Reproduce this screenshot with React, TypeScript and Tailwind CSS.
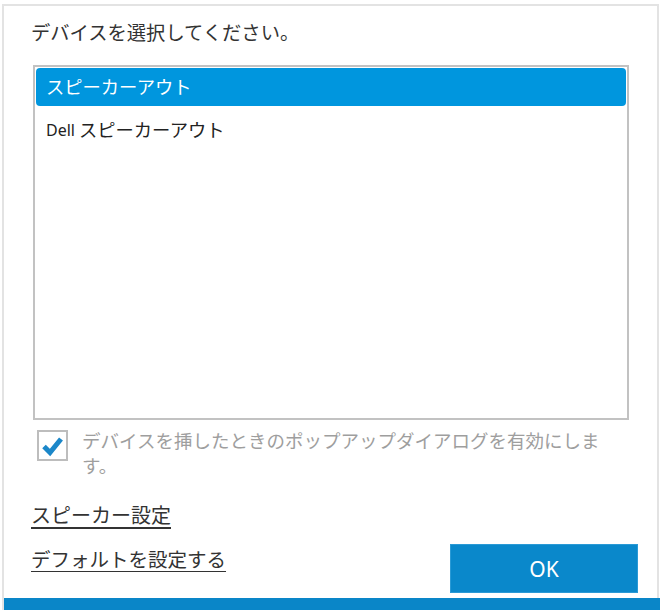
import React, { useState } from 'react'

const font = { fontFamily: '"Noto Sans", "Noto Sans CJK JP", sans-serif' }

const devices = [
  { latin: '', name: 'スピーカーアウト' },
  { latin: 'Dell', name: 'スピーカーアウト' },
]

export default function App() {
  const [selected, setSelected] = useState(0)
  const [popup, setPopup] = useState(true)

  return (
    <div className="w-[660px] h-[610px] bg-white pt-[4px] pl-[2px] pr-[1px] overflow-hidden" style={font}>
      <div className="h-full border-t-2 border-x-2 border-[#e3e3e3] flex flex-col">
        <div className="pl-[27px] pr-[28px] flex flex-col flex-1">
          {/* title */}
          <div className="pt-[13px] text-[19.3px] leading-[28px] text-[#333]">デバイスを選択してください。</div>

          {/* device list */}
          <div className="mt-[18px] ml-[2px] w-[596px] h-[355px] border-2 border-[#c2c2c2] p-px flex flex-col gap-[5px]">
            {devices.map((d, i) => (
              <button
                key={i}
                onClick={() => setSelected(i)}
                className={`h-[38px] rounded-[4px] pl-[10px] flex items-center text-left text-[18.3px] leading-none ${
                  selected === i ? 'bg-[#0096de] text-white' : 'text-[#222]'
                }`}
              >
                {d.latin && <span className="text-[16px] mr-[4px]">{d.latin}</span>}
                {d.name}
              </button>
            ))}
          </div>

          {/* checkbox */}
          <label className="mt-[8px] ml-[6px] flex items-start gap-[14px] cursor-pointer">
            <span
              onClick={() => setPopup(!popup)}
              className="mt-[2px] w-[31px] h-[31px] shrink-0 border-2 border-[#bdbdbd] bg-white flex items-center justify-center"
            >
              {popup && (
                <svg width="27" height="27" viewBox="0 0 27 27">
                  <path d="M5 14.5 L11 20.5 L22 7" fill="none" stroke="#1b87c9" strokeWidth="5" strokeLinejoin="miter" />
                </svg>
              )}
            </span>
            <span className="w-[526px] text-[18.5px] leading-[25px] text-[#9e9e9e]">
              デバイスを挿したときのポップアップダイアログを有効にします。
            </span>
          </label>

          {/* links */}
          <a className="mt-[24px] self-start text-[20px] leading-[28px] text-[#333] underline underline-offset-[4px] cursor-pointer">
            スピーカー設定
          </a>

          <div className="mt-[14px] flex items-start justify-between">
            <a className="mt-[2px] text-[19.5px] leading-[28px] text-[#333] underline underline-offset-[4px] cursor-pointer">
              デフォルトを設定する
            </a>
            <button className="mr-[-9px] w-[188px] h-[49px] bg-[#0a88cb] border border-[#2a9ad6] text-white text-[21px] flex items-center justify-center pt-[2px]">
              OK
            </button>
          </div>
        </div>

        <div className="h-[12px] mt-[5px] -mr-[3px] bg-[#0a86c8]" />
      </div>
    </div>
  )
}
